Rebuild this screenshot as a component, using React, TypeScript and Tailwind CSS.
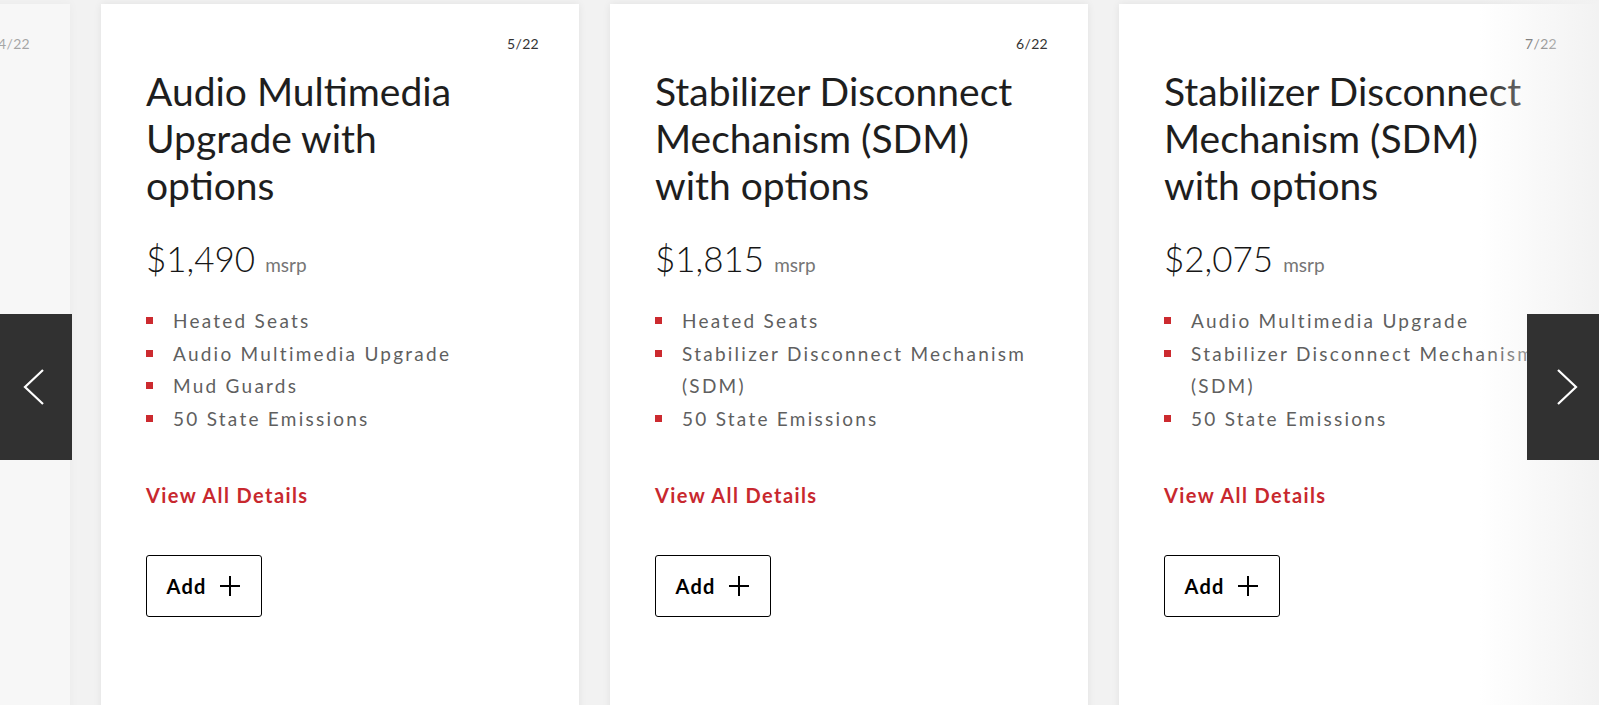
import React from "react";

type Accessory = {
  index: number;
  title: string[];
  price: string;
  items: string[][];
};

const accessories: Accessory[] = [
  {
    index: 4,
    title: ["Mud Guards with", "options"],
    price: "$1,210",
    items: [["Heated Seats"], ["Mud Guards"], ["50 State Emissions"]],
  },
  {
    index: 5,
    title: ["Audio Multimedia", "Upgrade with", "options"],
    price: "$1,490",
    items: [["Heated Seats"], ["Audio Multimedia Upgrade"], ["Mud Guards"], ["50 State Emissions"]],
  },
  {
    index: 6,
    title: ["Stabilizer Disconnect", "Mechanism (SDM)", "with options"],
    price: "$1,815",
    items: [["Heated Seats"], ["Stabilizer Disconnect Mechanism", "(SDM)"], ["50 State Emissions"]],
  },
  {
    index: 7,
    title: ["Stabilizer Disconnect", "Mechanism (SDM)", "with options"],
    price: "$2,075",
    items: [["Audio Multimedia Upgrade"], ["Stabilizer Disconnect Mechanism", "(SDM)"], ["50 State Emissions"]],
  },
];

const font = { fontFamily: "Lato, 'Open Sans', sans-serif" };

function Card({ a, faded }: { a: Accessory; faded?: boolean }) {
  return (
    <div
      className={`shrink-0 w-[478px] h-[760px] bg-white shadow-[0_0_8px_rgba(0,0,0,0.07)] pl-[45px] pr-[40px] pt-[29px] ${
        faded ? "opacity-40" : ""
      }`}
    >
      <div className="text-right text-[14px] leading-[22px] text-[#333] tracking-[0.3px]">{a.index}/22</div>
      <h2 className="mt-[13px] text-[39px] leading-[47px] text-[#1e1e1e] font-normal">
        {a.title.map((l, i) => (
          <div key={i}>{l}</div>
        ))}
      </h2>
      <div className="mt-[25px] flex items-baseline leading-[48px]">
        <span className="text-[35px] font-light text-[#161616]">{a.price}</span>
        <span className="ml-[10px] text-[19px] text-[#767676]">msrp</span>
      </div>
      <ul className="mt-[16px] text-[19px] leading-[32.5px] text-[#5f5f5f] tracking-[2.25px]">
        {a.items.map((lines, i) => (
          <li key={i} className="flex">
            <span className="w-[27px] shrink-0 pt-[12px]">
              <span className="block w-[7px] h-[7px] bg-[#cc2a2f]" />
            </span>
            <span className="whitespace-nowrap">
              {lines.map((l, j) => (
                <div key={j}>{l}</div>
              ))}
            </span>
          </li>
        ))}
      </ul>
      <a className="block mt-[48px] text-[20px] leading-[24px] font-bold text-[#c8282e] tracking-[1.4px]">
        View All Details
      </a>
      <button className="mt-[48px] w-[116px] h-[62px] border-[1.5px] border-black rounded-[3px] flex items-center justify-center gap-[13px] bg-white">
        <span className="text-[20px] font-bold text-black tracking-[1.2px]">Add</span>
        <svg width="22" height="22" viewBox="0 0 22 22" fill="none" stroke="black" strokeWidth="2">
          <path d="M11 1v20M1 11h20" />
        </svg>
      </button>
    </div>
  );
}

export default function App() {
  return (
    <div className="relative w-[1599px] h-[705px] overflow-hidden bg-[#f2f2f2]" style={font}>
      <div className="flex gap-[31px] ml-[-408px] pt-[4px]">
        {accessories.map((a, i) => (
          <Card key={a.index} a={a} faded={i === 0} />
        ))}
      </div>
      <div className="absolute top-0 right-0 w-[120px] h-full bg-gradient-to-r from-[#f2f2f200] to-[#f2f2f2]" />
      <button className="absolute left-0 top-[314px] w-[72px] h-[146px] bg-[#313131] flex items-center justify-center pr-[4px]">
        <svg width="22" height="38" viewBox="0 0 22 38" fill="none" stroke="white" strokeWidth="2.2">
          <path d="M20 2L2 19l18 17" />
        </svg>
      </button>
      <button className="absolute right-0 top-[314px] w-[72px] h-[146px] bg-[#313131] flex items-center justify-center pl-[8px]">
        <svg width="22" height="38" viewBox="0 0 22 38" fill="none" stroke="white" strokeWidth="2.2">
          <path d="M2 2l18 17L2 36" />
        </svg>
      </button>
    </div>
  );
}
